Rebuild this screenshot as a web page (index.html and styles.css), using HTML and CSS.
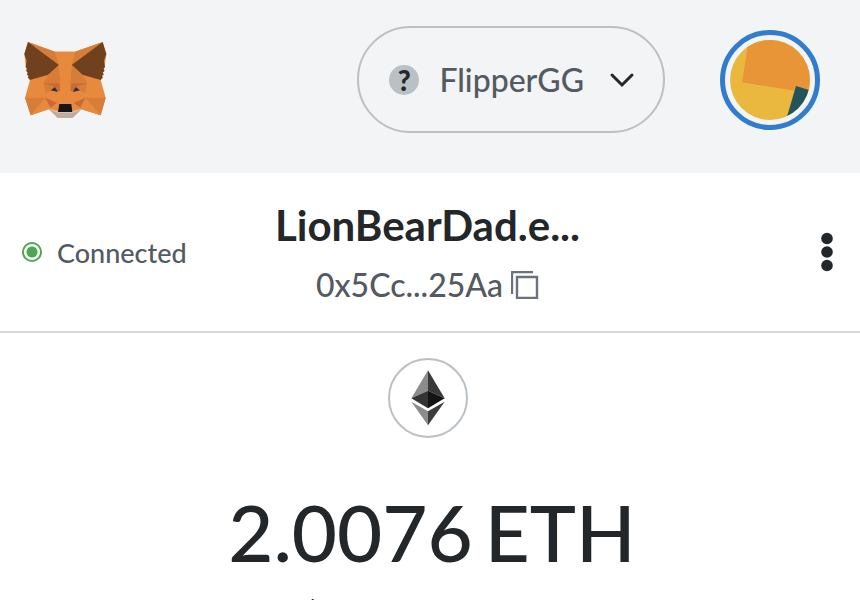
FILE: index.html
```html
<!DOCTYPE html>
<html lang="en">
<head>
<meta charset="utf-8">
<meta name="viewport" content="width=device-width, initial-scale=1">
<title>Wallet</title>
<link rel="stylesheet" href="styles.css">
</head>
<body>
<header class="app-header">
  <a class="logo" href="#" aria-label="Home">
    <svg width="83" height="78" viewBox="42 33 249 234" aria-hidden="true">
      <path fill="#e88a3e" d="M54 36 135 65H195L278 36 289 72 283 115 272 150 287 203 272 256 214 238 187 264H144L116 238 62 256 45 203 60 150 48 115 43 72Z"/>
      <path fill="#d77d38" d="M54 36 135 65 147 105ZM278 36 195 65 185 105Z"/>
      <path fill="#70411f" d="M54 36 147 105 115 134 60 150 53 142 56 138 50 133 54 128 48 122 52 116 47 111 50 92 43 72ZM278 36 185 105 217 134 272 150 279 142 276 138 282 133 278 128 284 122 280 116 285 111 282 92 289 72Z"/>
      <path fill="#d77d38" d="M147 105 115 134 100 160 148 160 152 175ZM185 105 217 134 232 160 184 160 180 175Z"/>
      <path fill="#e88a3e" d="M135 65H195L185 105 177 220H155L147 105Z"/>
      <path fill="#d77d38" d="M45 203H106L116 235 62 256ZM287 203H226L216 235 272 256Z"/>
      <path fill="#e88a3e" d="M106 203 62 256 116 238 121 233ZM226 203 272 256 214 238 211 233Z"/>
      <path fill="#c96a38" d="M106 203 141 219 121 233ZM226 203 191 219 211 233ZM100 160H148L151 183 125 181ZM232 160H184L181 183 207 181Z"/>
      <path fill="#d77d38" d="M100 160 132 169 125 181 107 190ZM232 160 200 169 207 181 225 190Z"/>
      <path fill="#243447" d="M122 181 135 172 144 186ZM210 181 197 172 188 186Z"/>
      <path fill="#d7c2b4" d="M116 236 147 244H184L216 236 187 264H144Z"/>
      <path fill="#c0ac9e" d="M118 238 145 249H187L214 238 187 264H144Z"/>
      <path fill="#161616" d="M148 222H184L187 246H144Z"/>
    </svg>
  </a>
  <button class="network" type="button">
    <span class="network-mark">?</span>
    <span class="network-name">FlipperGG</span>
    <svg class="chevron" width="26" height="16" viewBox="0 0 26 16" aria-hidden="true"><path d="M3 3 13 13 23 3" fill="none" stroke="#24272a" stroke-width="3" stroke-linecap="round"/></svg>
  </button>
  <button class="avatar" type="button" aria-label="Account menu">
    <svg width="80" height="80" viewBox="0 0 240 240" aria-hidden="true">
      <clipPath id="disc"><circle cx="120" cy="120" r="120"/></clipPath>
      <g clip-path="url(#disc)">
        <path fill="#eab83f" d="M0 0H240V240H0Z"/>
        <path fill="#e79536" d="M56 0H240V160L36 127Z"/>
        <path fill="#23545c" d="M198 138 240 151V240H168Z"/>
      </g>
    </svg>
  </button>
</header>
<section class="account-bar">
  <button class="status" type="button"><span class="status-dot"></span>Connected</button>
  <div class="account">
    <h1 class="account-name">LionBearDad.e...</h1>
    <button class="address" type="button">0x5Cc...25Aa
      <svg width="28" height="28" viewBox="0 0 28 28" aria-hidden="true"><path d="M1 23V1H22M6 6H26V27H6Z" fill="none" stroke="#6a737d" stroke-width="2.4"/></svg>
    </button>
  </div>
  <button class="more" type="button" aria-label="Account options">
    <svg width="12" height="40" viewBox="0 0 12 40" aria-hidden="true"><g fill="#24272a"><circle cx="6" cy="6.5" r="5.8"/><circle cx="6" cy="20" r="5.8"/><circle cx="6" cy="33.5" r="5.8"/></g></svg>
  </button>
</section>
<main class="balance">
  <div class="token">
    <svg width="34" height="56" viewBox="95 62 102 168" aria-hidden="true">
      <path fill="#8c8c8c" d="M146 63 96 147 146 124Z"/>
      <path fill="#393939" d="M146 63 196 147 146 124Z"/>
      <path fill="#343434" d="M96 147 146 124V177Z"/>
      <path fill="#141414" d="M196 147 146 124V177Z"/>
      <path fill="#8c8c8c" d="M96 157 146 186V228Z"/>
      <path fill="#3c3c3b" d="M196 157 146 186V228Z"/>
    </svg>
  </div>
  <p class="amount"><span>2.0076</span> <span>ETH</span></p>
  <p class="fiat">$</p>
</main>
</body>
</html>
```
FILE: styles.css
```css
* { box-sizing: border-box; }

body {
  margin: 0;
  height: 100vh;
  overflow: hidden;
  background: #fff;
  color: #24272a;
  font-family: Lato, "Liberation Sans", sans-serif;
  font-weight: 500;
}

button {
  padding: 0;
  border: 0;
  background: none;
  color: #535a61;
  font: inherit;
  cursor: pointer;
}

svg { display: block; flex: none; }

h1, p { margin: 0; }

.app-header {
  display: flex;
  align-items: center;
  gap: 55px;
  padding: 26px 40px 40px 24px;
  background: #f2f4f6;
}

.logo { margin-right: auto; }

.network {
  display: flex;
  align-items: center;
  height: 107px;
  padding: 0 28px 0 30px;
  border: 2px solid #bbc0c5;
  border-radius: 54px;
  font-size: 32px;
}

.network-mark {
  width: 30px;
  margin-right: 20px;
  border-radius: 50%;
  background: #bbc0c5;
  color: #24272a;
  font-size: 28px;
  font-weight: 900;
  line-height: 30px;
}

.chevron { margin-left: 25px; }

.avatar {
  padding: 5px;
  border: 5px solid #327ccf;
  border-radius: 50%;
}

.account-bar {
  display: grid;
  grid-template-columns: 1fr auto 1fr;
  align-items: center;
  height: 160px;
  padding: 0 27px 0 22px;
  border-bottom: 2px solid #d6d9dc;
}

.status {
  display: flex;
  align-items: center;
  gap: 15px;
  justify-self: start;
  font-size: 27px;
}

.status-dot {
  width: 20px;
  height: 20px;
  border: 2px solid #4ca750;
  border-radius: 50%;
  background: radial-gradient(circle, #4ca750 5px, transparent 6px);
}

.account {
  display: flex;
  flex-direction: column;
  align-items: center;
  gap: 10px;
}

.account-name {
  font-size: 42px;
  font-weight: 700;
  line-height: 56px;
}

.address {
  display: flex;
  align-items: center;
  gap: 8px;
  font-size: 32px;
  line-height: 44px;
}

.more { justify-self: end; }

.balance {
  display: flex;
  flex-direction: column;
  align-items: center;
  padding: 25px 4px 0 0;
}

.token {
  display: grid;
  place-items: center;
  width: 80px;
  height: 80px;
  border: 2px solid #bbc0c5;
  border-radius: 50%;
}

.amount {
  display: flex;
  gap: 12px;
  margin-top: 44px;
  padding-left: 8px;
  font-size: 78px;
  line-height: 100px;
}

.fiat {
  width: 252px;
  margin-top: 12px;
  font-size: 32px;
  line-height: 40px;
}
```
